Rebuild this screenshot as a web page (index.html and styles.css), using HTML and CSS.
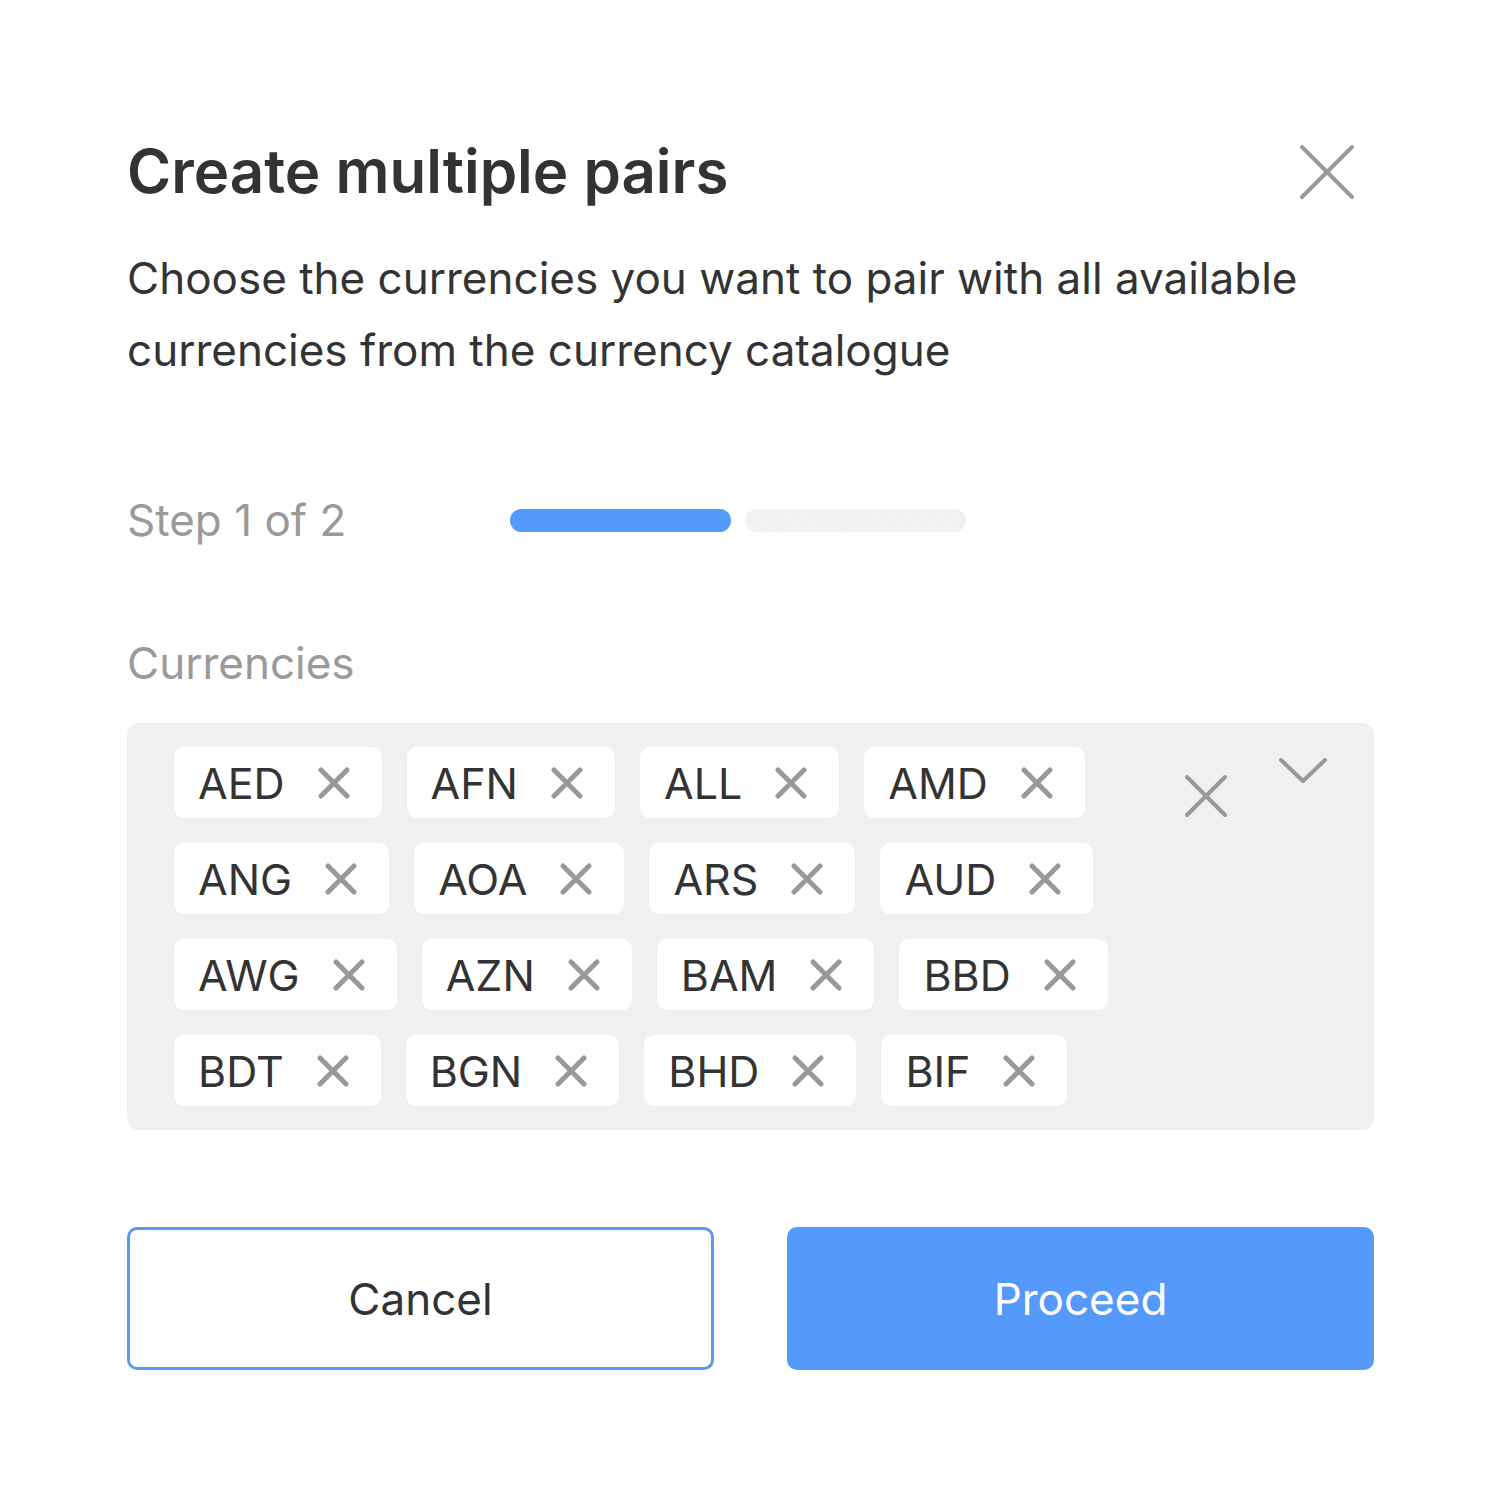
FILE: index.html
```html
<!DOCTYPE html>
<html lang="en">
<head>
<meta charset="utf-8">
<title>Create multiple pairs</title>
<link rel="stylesheet" href="styles.css">
</head>
<body>
<div class="modal">
  <div class="header">
    <h1 class="title">Create multiple pairs</h1>
    <button class="close" aria-label="Close">
      <svg width="58" height="58" viewBox="0 0 58 58"><path d="M4 4L54 54M54 4L4 54" stroke="#999" stroke-width="4" stroke-linecap="round"/></svg>
    </button>
  </div>
  <p class="desc">Choose the currencies you want to pair with all available currencies from the currency catalogue</p>
  <div class="step">
    <span class="step-label">Step 1 of 2</span>
    <div class="bars">
      <span class="bar bar-active"></span>
      <span class="bar bar-idle"></span>
    </div>
  </div>
  <div class="field-label">Currencies</div>
  <div class="select">
    <div class="tags">
      <span class="tag"><span class="tag-text">AED</span><svg class="tag-x" viewBox="0 0 32 32"><path d="M3 3L29 29M29 3L3 29"/></svg></span>
      <span class="tag"><span class="tag-text">AFN</span><svg class="tag-x" viewBox="0 0 32 32"><path d="M3 3L29 29M29 3L3 29"/></svg></span>
      <span class="tag"><span class="tag-text">ALL</span><svg class="tag-x" viewBox="0 0 32 32"><path d="M3 3L29 29M29 3L3 29"/></svg></span>
      <span class="tag"><span class="tag-text">AMD</span><svg class="tag-x" viewBox="0 0 32 32"><path d="M3 3L29 29M29 3L3 29"/></svg></span>
      <span class="tag"><span class="tag-text">ANG</span><svg class="tag-x" viewBox="0 0 32 32"><path d="M3 3L29 29M29 3L3 29"/></svg></span>
      <span class="tag"><span class="tag-text">AOA</span><svg class="tag-x" viewBox="0 0 32 32"><path d="M3 3L29 29M29 3L3 29"/></svg></span>
      <span class="tag"><span class="tag-text">ARS</span><svg class="tag-x" viewBox="0 0 32 32"><path d="M3 3L29 29M29 3L3 29"/></svg></span>
      <span class="tag"><span class="tag-text">AUD</span><svg class="tag-x" viewBox="0 0 32 32"><path d="M3 3L29 29M29 3L3 29"/></svg></span>
      <span class="tag"><span class="tag-text">AWG</span><svg class="tag-x" viewBox="0 0 32 32"><path d="M3 3L29 29M29 3L3 29"/></svg></span>
      <span class="tag"><span class="tag-text">AZN</span><svg class="tag-x" viewBox="0 0 32 32"><path d="M3 3L29 29M29 3L3 29"/></svg></span>
      <span class="tag"><span class="tag-text">BAM</span><svg class="tag-x" viewBox="0 0 32 32"><path d="M3 3L29 29M29 3L3 29"/></svg></span>
      <span class="tag"><span class="tag-text">BBD</span><svg class="tag-x" viewBox="0 0 32 32"><path d="M3 3L29 29M29 3L3 29"/></svg></span>
      <span class="tag"><span class="tag-text">BDT</span><svg class="tag-x" viewBox="0 0 32 32"><path d="M3 3L29 29M29 3L3 29"/></svg></span>
      <span class="tag"><span class="tag-text">BGN</span><svg class="tag-x" viewBox="0 0 32 32"><path d="M3 3L29 29M29 3L3 29"/></svg></span>
      <span class="tag"><span class="tag-text">BHD</span><svg class="tag-x" viewBox="0 0 32 32"><path d="M3 3L29 29M29 3L3 29"/></svg></span>
      <span class="tag"><span class="tag-text">BIF</span><svg class="tag-x" viewBox="0 0 32 32"><path d="M3 3L29 29M29 3L3 29"/></svg></span>
    </div>
    <div class="controls">
      <svg class="clear" width="44" height="44" viewBox="0 0 44 44"><path d="M3 3L41 41M41 3L3 41" stroke="#999" stroke-width="4" stroke-linecap="round"/></svg>
      <svg class="chevron" width="50" height="28" viewBox="0 0 50 28"><path d="M3 3L25 24L47 3" fill="none" stroke="#999" stroke-width="4" stroke-linecap="round" stroke-linejoin="round"/></svg>
    </div>
  </div>
  <div class="actions">
    <button class="btn btn-outline">Cancel</button>
    <button class="btn btn-primary">Proceed</button>
  </div>
</div>
</body>
</html>
```

FILE: styles.css
```css
* { box-sizing: border-box; }
html, body { margin: 0; padding: 0; background: #fff; }
body { font-family: Inter, "Noto Sans", sans-serif; color: #333; }

.modal {
  width: 1497px;
  padding: 133px 123px 0 127px;
}

.header {
  display: flex;
  justify-content: space-between;
  align-items: flex-start;
}
.title {
  margin: 0;
  font-size: 60px;
  font-weight: 600;
  line-height: 76px;
  color: #333;
  letter-spacing: 0;
}
.close {
  border: 0;
  background: none;
  padding: 0;
  margin: 10px 18px 0 0;
  width: 58px;
  height: 58px;
  cursor: pointer;
}
.close svg { display: block; }

.desc {
  margin: 33px 0 0;
  font-size: 44px;
  line-height: 72px;
  color: #333;
  max-width: 1220px;
}

.step {
  display: flex;
  align-items: center;
  margin-top: 104px;
}
.step-label {
  font-size: 44px;
  line-height: 60px;
  color: #9a9a9a;
  width: 383px;
}
.bars { display: flex; gap: 14px; }
.bar {
  display: block;
  width: 221px;
  height: 23px;
  border-radius: 12px;
}
.bar-active { background: #5599fb; }
.bar-idle {
  background: #f2f2f2;
  background-image: repeating-linear-gradient(45deg, #eeeeee 0 1px, #f5f5f5 1px 2px);
}

.field-label {
  margin-top: 83px;
  font-size: 44px;
  line-height: 60px;
  color: #9a9a9a;
}

.select {
  margin-top: 30px;
  background: #f0f0f0;
  border-radius: 12px;
  padding: 24px 46px 24px 47px;
  display: flex;
  width: 1247px;
}
.tags {
  flex: 1;
  display: flex;
  flex-wrap: wrap;
  gap: 25px;
  align-content: flex-start;
  max-width: 960px;
}
.tag {
  display: inline-flex;
  align-items: center;
  height: 71px;
  background: #fff;
  border-radius: 10px;
  padding: 0 32px 0 24px;
}
.tag-text {
  font-size: 43px;
  line-height: 50px;
  color: #333;
}
.tag-x {
  width: 32px;
  height: 32px;
  margin-left: 33px;
  fill: none;
  stroke: #999;
  stroke-width: 5;
  stroke-linecap: round;
}
.controls {
  display: flex;
  align-items: flex-start;
  margin-left: auto;
  gap: 50px;
}
.clear { display: block; margin-top: 27px; }
.chevron { display: block; margin-top: 10px; }

.actions {
  display: grid;
  grid-template-columns: 587px 587px;
  justify-content: space-between;
  margin-top: 97px;
}
.btn {
  height: 143px;
  border-radius: 10px;
  font-family: Inter, sans-serif;
  font-size: 44px;
  cursor: pointer;
}
.btn-outline {
  background: #fff;
  border: 3px solid #5b9bef;
  color: #333;
}
.btn-primary {
  background: #5599fb;
  border: 0;
  color: #fff;
}
```
